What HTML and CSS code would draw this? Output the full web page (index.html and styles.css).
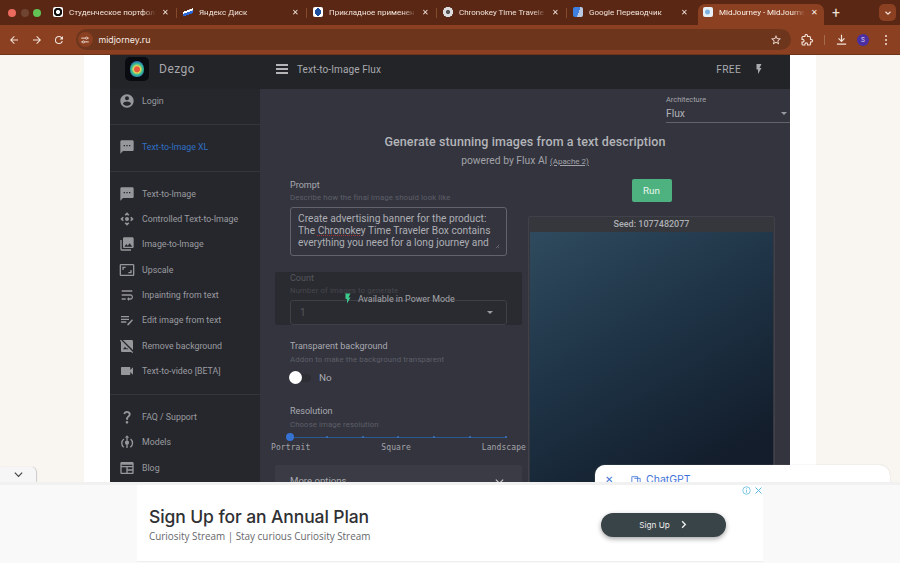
FILE: index.html
```html
<!DOCTYPE html>
<html lang="en">
<head>
<meta charset="utf-8">
<title>MidJourney - MidJourney</title>
<link rel="stylesheet" href="styles.css">
</head>
<body>
<div class="tabbar">
  <div class="lights"><i class="light red"></i><i class="light dim"></i><i class="light green"></i></div>
  <div class="tab"><span class="fav fav-a"></span><span class="tab-title">Студенческое портфол</span><span class="tab-x">✕</span></div>
  <div class="tab"><span class="fav fav-b"></span><span class="tab-title">Яндекс Диск</span><span class="tab-x">✕</span></div>
  <div class="tab"><span class="fav fav-c"></span><span class="tab-title">Прикладное применен</span><span class="tab-x">✕</span></div>
  <div class="tab"><span class="fav fav-d"></span><span class="tab-title">Chronokey Time Travele</span><span class="tab-x">✕</span></div>
  <div class="tab tab-last"><span class="fav fav-e"></span><span class="tab-title">Google Переводчик</span><span class="tab-x">✕</span></div>
  <div class="tab tab-active"><span class="fav fav-f"></span><span class="tab-title">MidJourney - MidJourne</span><span class="tab-x">✕</span></div>
  <span class="newtab">+</span>
  <span class="tabmenu"><svg viewBox="0 0 12 12" class="ic10"><path d="M3 4.500l3 3 3-3" fill="none" stroke="#f3e3da" stroke-width="1.400"/></svg></span>
</div>
<div class="toolbar">
  <svg viewBox="0 0 24 24" class="navic"><path d="M20 11H7.830l5.590-5.590L12 4l-8 8 8 8 1.410-1.410L7.830 13H20z"/></svg>
  <svg viewBox="0 0 24 24" class="navic"><path d="M12 4l-1.410 1.410L16.170 11H4v2h12.170l-5.580 5.590L12 20l8-8z"/></svg>
  <svg viewBox="0 0 24 24" class="navic"><path d="M17.650 6.350A7.960 7.960 0 0 0 12 4a8 8 0 1 0 7.730 10h-2.080A6 6 0 1 1 12 6c1.660 0 3.140.69 4.220 1.780L13 11h7V4l-2.350 2.350z"/></svg>
  <div class="omnibox">
    <span class="site-ic"><svg viewBox="0 0 16 16" class="ic10"><path d="M2 5h7M12 5h2M2 11h2M7 11h7" stroke="#f3e3da" stroke-width="1.500" fill="none"/><circle cx="10.500" cy="5" r="1.700" fill="none" stroke="#f3e3da" stroke-width="1.300"/><circle cx="5.500" cy="11" r="1.700" fill="none" stroke="#f3e3da" stroke-width="1.300"/></svg></span>
    <span class="url">midjorney.ru</span>
    <svg viewBox="0 0 24 24" class="star"><path d="M22 9.240l-7.190-.62L12 2 9.190 8.630 2 9.240l5.460 4.730L5.820 21 12 17.270 18.180 21l-1.630-7.030L22 9.240zM12 15.400l-3.760 2.270 1-4.280-3.320-2.880 4.380-.38L12 6.100l1.710 4.040 4.380.38-3.320 2.880 1 4.280L12 15.400z"/></svg>
  </div>
  <svg viewBox="0 0 24 24" class="puzzle"><path d="M20.500 11H19V7c0-1.100-.9-2-2-2h-4V3.500a2.500 2.500 0 0 0-5 0V5H4c-1.100 0-2 .9-2 2v3.800h1.500a2.700 2.700 0 0 1 0 5.400H2V20c0 1.100.9 2 2 2h3.800v-1.500a2.700 2.700 0 0 1 5.400 0V22H17c1.100 0 2-.9 2-2v-4h1.500a2.500 2.500 0 0 0 0-5z" fill="none" stroke="#f3e3da" stroke-width="2.200"/></svg>
  <i class="tool-sep"></i>
  <svg viewBox="0 0 24 24" class="download"><path d="M12 3v12M6.500 10l5.500 5.500 5.500-5.500M3.500 20.500h17" fill="none" stroke="#f3e3da" stroke-width="2.200"/></svg>
  <span class="avatar">S</span>
  <span class="kebab"><i></i><i></i><i></i></span>
</div>

<div class="page">
  <div class="sheet">
    <div class="app">
      <aside class="sidebar">
        <div class="brand">
          <span class="logo"><i class="logo-art"></i></span>
          <span class="brand-name">Dezgo</span>
        </div>
        <div class="side-sec side-first">
          <div class="side-item"><svg viewBox="0 0 24 24" class="side-ic"><path d="M12 2C6.480 2 2 6.480 2 12s4.480 10 10 10 10-4.480 10-10S17.520 2 12 2zm0 3c1.660 0 3 1.340 3 3s-1.340 3-3 3-3-1.340-3-3 1.340-3 3-3zm0 14.200c-2.500 0-4.710-1.280-6-3.220.03-1.990 4-3.080 6-3.080 1.990 0 5.970 1.090 6 3.080-1.290 1.940-3.500 3.220-6 3.220z"/></svg><span>Login</span></div>
        </div>
        <div class="side-sec">
          <div class="side-item side-on"><svg viewBox="0 0 24 24" class="side-ic"><path d="M20 2H4c-1.100 0-1.990.9-1.990 2L2 22l4-4h14c1.100 0 2-.9 2-2V4c0-1.100-.9-2-2-2zM9 11H7V9h2v2zm4 0h-2V9h2v2zm4 0h-2V9h2v2z"/></svg><span>Text-to-Image XL</span></div>
        </div>
        <div class="side-sec">
          <div class="side-item"><svg viewBox="0 0 24 24" class="side-ic"><path d="M20 2H4c-1.100 0-1.990.9-1.990 2L2 22l4-4h14c1.100 0 2-.9 2-2V4c0-1.100-.9-2-2-2zM9 11H7V9h2v2zm4 0h-2V9h2v2zm4 0h-2V9h2v2z"/></svg><span>Text-to-Image</span></div>
          <div class="side-item"><svg viewBox="0 0 24 24" class="side-ic"><path d="M15.540 5.540L13.770 7.300 12 5.540 10.230 7.300 8.460 5.540 12 2l3.540 3.540zm2.920 10l-1.760-1.770L18.460 12l-1.760-1.770 1.760-1.770L22 12l-3.540 3.540zm-10 2.920l1.770-1.760L12 18.460l1.770-1.760 1.770 1.760L12 22l-3.540-3.540zm-2.920-10l1.760 1.770L5.540 12l1.760 1.770-1.760 1.770L2 12l3.540-3.540z"/><circle cx="12" cy="12" r="3"/></svg><span>Controlled Text-to-Image</span></div>
          <div class="side-item"><svg viewBox="0 0 24 24" class="side-ic"><path d="M22 16V4c0-1.100-.9-2-2-2H8c-1.100 0-2 .9-2 2v12c0 1.100.9 2 2 2h12c1.100 0 2-.9 2-2zm-11-4l2.030 2.710L16 11l4 5H8l3-4zM2 6v14c0 1.100.9 2 2 2h14v-2H4V6H2z"/></svg><span>Image-to-Image</span></div>
          <div class="side-item"><svg viewBox="0 0 24 24" class="side-ic"><path d="M19 12h-2v3h-3v2h5v-5zM7 9h3V7H5v5h2V9zm14-6H3c-1.100 0-2 .9-2 2v14c0 1.100.9 2 2 2h18c1.100 0 2-.9 2-2V5c0-1.100-.9-2-2-2zm0 16.010H3V4.990h18v14.020z"/></svg><span>Upscale</span></div>
          <div class="side-item"><svg viewBox="0 0 24 24" class="side-ic"><path d="M4 19h6v-2H4v2zM20 5H4v2h16V5zm-3 6H4v2h13.250c1.100 0 2 .9 2 2s-.9 2-2 2H15v-2l-3 3 3 3v-2h2c2.210 0 4-1.790 4-4s-1.790-4-4-4z"/></svg><span>Inpainting from text</span></div>
          <div class="side-item"><svg viewBox="0 0 24 24" class="side-ic"><path d="M3 6h12v2H3zM3 10h12v2H3zM3 14h8v2H3zM21 12.400L19.600 11 12.500 18.100V20h1.900z"/></svg><span>Edit image from text</span></div>
          <div class="side-item"><svg viewBox="0 0 24 24" class="side-ic"><path d="M21 5c0-1.100-.9-2-2-2H5.830L21 18.170V5zM2.810 2.810L1.390 4.220 3 5.830V19c0 1.100.9 2 2 2h13.170l1.610 1.610 1.410-1.410L2.810 2.810zM6 17l3-4 2.250 3 .82-1.100 2.100 2.100H6z"/></svg><span>Remove background</span></div>
          <div class="side-item"><svg viewBox="0 0 24 24" class="side-ic"><path d="M17 10.500V7c0-.55-.45-1-1-1H4c-.55 0-1 .45-1 1v10c0 .55.45 1 1 1h12c.55 0 1-.45 1-1v-3.500l4 4v-11l-4 4z"/></svg><span>Text-to-video [BETA]</span></div>
        </div>
        <div class="side-sec side-end">
          <div class="side-item"><svg viewBox="0 0 24 24" class="side-ic"><path d="M11.070 12.850c.77-1.390 2.250-2.210 3.110-3.440.91-1.290.4-3.700-2.180-3.700-1.690 0-2.520 1.280-2.870 2.340L6.540 6.960C7.250 4.830 9.180 3 11.990 3c2.350 0 3.960 1.070 4.780 2.410.7 1.150 1.110 3.300.03 4.900-1.200 1.770-2.350 2.310-2.970 3.450-.25.46-.35.76-.35 2.240h-2.890c-.01-.78-.13-2.050.48-3.150zM14 20c0 1.100-.9 2-2 2s-2-.9-2-2 .9-2 2-2 2 .9 2 2z"/></svg><span>FAQ / Support</span></div>
          <div class="side-item"><svg viewBox="0 0 24 24" class="side-ic"><path d="M12 2l3.200 3.600H8.800z"/><path d="M12 5v5M12 15v6M7 20a8 8 0 0 1 .4-12.600M17 20a8 8 0 0 0 .4-12.600" fill="none" stroke="#96979b" stroke-width="2"/><circle cx="12" cy="13" r="3.200"/></svg><span>Models</span></div>
          <div class="side-item"><svg viewBox="0 0 24 24" class="side-ic"><path d="M20 3H4c-1.100 0-2 .9-2 2v14c0 1.100.9 2 2 2h16c1.100 0 2-.9 2-2V5c0-1.100-.9-2-2-2zM4 19v-8h7v8H4zm9 0v-3h7v3h-7zm7-5h-7v-3h7v3zM4 9V7h16v2H4z"/></svg><span>Blog</span></div>
        </div>
      </aside>
      <div class="content">
        <header class="topbar">
          <span class="burger"><i></i><i></i><i></i></span>
          <span class="top-title">Text-to-Image Flux</span>
          <span class="free">FREE</span>
          <svg viewBox="0 0 24 24" class="top-bolt"><path d="M7 2v11h3v9l7-12h-4l4-8z"/></svg>
        </header>
        <main class="main">
          <div class="arch-row">
            <div class="arch">
              <div class="arch-label">Architecture</div>
              <div class="arch-value"><span>Flux</span><i class="caret"></i></div>
            </div>
          </div>
          <h1 class="headline">Generate stunning images from a text description</h1>
          <p class="powered">powered by Flux AI <a class="license">(Apache 2)</a></p>
          <div class="cols">
            <section class="form">
              <div class="fld">
                <div class="fld-label">Prompt</div>
                <div class="fld-help">Describe how the final image should look like</div>
                <div class="prompt"><span class="word">Create advertising banner for the product:</span><br>The <span class="typo">Chronokey</span> Time Traveler Box contains<br>everything you need for a long journey and<svg viewBox="0 0 6 6" class="grip"><path d="M1 5l4-4M3.500 5L5 3.500" stroke="#8a8b92" stroke-width=".7"/></svg></div>
              </div>
              <div class="fld fld-locked">
                <div class="fld-label">Count</div>
                <div class="fld-help">Number of images to generate</div>
                <div class="count-select"><span>1</span><i class="caret"></i></div>
                <div class="lock-note"><svg viewBox="0 0 24 24" class="lock-bolt"><path d="M7 2v11h3v9l7-12h-4l4-8z"/></svg><span>Available in Power Mode</span></div>
              </div>
              <div class="fld fld-trans">
                <div class="fld-label">Transparent background</div>
                <div class="fld-help">Addon to make the background transparent</div>
                <div class="toggle-row"><span class="toggle"><i class="knob"></i></span><span>No</span></div>
              </div>
              <div class="fld fld-res">
                <div class="fld-label">Resolution</div>
                <div class="fld-help">Choose image resolution</div>
                <div class="slider"><i class="thumb"></i><i class="tick"></i><i class="tick"></i><i class="tick"></i><i class="tick"></i><i class="tick"></i><i class="tick"></i></div>
                <div class="marks"><span>Portrait</span><span>Square</span><span>Landscape</span></div>
              </div>
              <div class="more"><span>More options</span><svg viewBox="0 0 12 12" class="more-ic"><path d="M2 4l4 4 4-4" fill="none" stroke="#c5c5c9" stroke-width="1.300"/></svg></div>
            </section>
            <section class="result">
              <button class="run">Run</button>
              <div class="seed-card">
                <div class="seed">Seed: 1077482077</div>
                <div class="picture"></div>
              </div>
            </section>
          </div>
        </main>
      </div>
    </div>
  </div>
  <span class="collapse"><svg viewBox="0 0 12 12" class="collapse-ic"><path d="M2 4l4 4 4-4" fill="none" stroke="#444" stroke-width="1.300"/></svg></span>
  <div class="gpt"><span class="gpt-x">✕</span><svg viewBox="0 0 12 12" class="gpt-ic"><path d="M1 11V2h7v9M4 4h7v7" fill="none" stroke="#3f74d8" stroke-width="1"/></svg><span class="gpt-name">ChatGPT</span></div>
</div>

<div class="adbar">
  <div class="ad">
    <div class="ad-text">
      <div class="ad-title">Sign Up for an Annual Plan</div>
      <div class="ad-sub">Curiosity Stream | Stay curious Curiosity Stream</div>
    </div>
    <div class="ad-btn"><span>Sign Up</span><svg viewBox="0 0 10 10" class="ad-chev"><path d="M3.500 1.500L7 5 3.500 8.500" fill="none" stroke="#f1f1f1" stroke-width="1.500"/></svg></div>
    <div class="ad-marks"><svg viewBox="0 0 12 12" class="ad-mark"><circle cx="6" cy="6" r="5" fill="none" stroke="#57b7dc"/><path d="M6 5v4M6 3v1.200" stroke="#57b7dc"/></svg><svg viewBox="0 0 12 12" class="ad-mark"><path d="M2 2l8 8M10 2l-8 8" stroke="#57b7dc" stroke-width="1.300"/></svg></div>
  </div>
</div>
</body>
</html>
```
FILE: styles.css
```css
* { box-sizing: border-box; }
html, body { margin: 0; padding: 0; }
body {
  width: 900px; height: 563px; overflow: hidden;
  display: flex; flex-direction: column;
  font-family: Roboto, "Liberation Sans", sans-serif;
  background: #fff;
  filter: blur(.3px);
}

/* browser chrome */
.tabbar {
  height: 25px; flex: none; display: flex; align-items: flex-end;
  background: #592713; color: #f1e3da; font: 8px Roboto, "Noto Sans CJK SC", sans-serif;
}
.lights { width: 47px; flex: none; height: 25px; display: flex; gap: 4.700px; padding: 9px 0 0 8px; }
.light { width: 8px; height: 8px; border-radius: 50%; display: block; }
.red { background: #ec6a5e; }
.dim { background: #6f4532; }
.green { background: #61c454; }
.tab {
  width: 130px; height: 21px; flex: none; display: flex; align-items: center;
  padding: 0 6px 5px; gap: 6px; position: relative;
}
.tab::after { content: ""; position: absolute; right: 0; top: 4px; height: 10px; width: 1px; background: #85492c; }
.tab-last { width: 131px; padding-right: 8px; }
.tab-last::after, .tab-active::after { display: none; }
.tab-active { width: 126px; background: #8b4021; border-radius: 7px 7px 0 0; padding: 0 4px 5px 5px; color: #fbeee6; }
.fav { width: 10px; height: 10px; flex: none; border-radius: 2px; background: #fff; display: block; }
.fav-a { background: radial-gradient(circle, #fff 0 2px, #111 2.200px 4.200px, #fff 4.400px); }
.fav-b { background: linear-gradient(160deg, transparent 35%, #fff 36% 50%, #2a66d8 52% 70%, transparent 72%); }
.fav-c { background: radial-gradient(ellipse 3px 4px, #1c4fa0 0 100%, #fff 100%); }
.fav-d { background: radial-gradient(circle, #555 0 2px, #ddd 2.200px 5px, transparent 5.200px); }
.fav-e { background: linear-gradient(110deg, #3f7fe0 0 55%, #b9c9e4 56%); }
.fav-f { background: radial-gradient(circle at 45% 50%, #7fb4e2 0 2px, #e8f1f8 3px); }
.tab-title {
  flex: 1; min-width: 0; white-space: nowrap; overflow: hidden;
  -webkit-mask-image: linear-gradient(90deg, #000 85%, transparent);
  mask-image: linear-gradient(90deg, #000 85%, transparent);
}
.tab-x { font-size: 8px; margin-right: 2px; flex: none; }
.newtab { width: 24px; height: 21px; flex: none; text-align: center; font-size: 14px; line-height: 18px; }
.tabmenu {
  width: 17px; height: 17px; flex: none; margin: 0 4px 4px auto; border-radius: 5px;
  background: #8b4021; display: flex; align-items: center; justify-content: center;
}
.ic10 { width: 10px; height: 10px; display: block; }

.toolbar {
  height: 30px; flex: none; display: flex; align-items: center; background: #8b4021;
  border-bottom: 1px solid #6f3319; padding: 0 0 0 8px;
}
.navic { width: 12px; height: 12px; fill: #f3e3da; margin-right: 10.500px; flex: none; }
.omnibox {
  width: 265px; flex: 1 1 auto; height: 21px; margin: 0 10px 0 0; background: #6d351c; border-radius: 11px;
  display: flex; align-items: center; padding: 0 9px 0 2px; color: #f7ebe4; font: 8.800px Inter, sans-serif;
}
.site-ic { width: 15px; height: 15px; border-radius: 50%; background: #8b4021; display: flex; align-items: center; justify-content: center; margin-right: 6px; }
.url { flex: 1; }
.star { width: 12px; height: 12px; fill: #f3e3da; }
.puzzle { width: 12px; height: 12px; flex: none; margin-right: 10.500px; }
.tool-sep { width: 1px; height: 10px; background: #a5694b; margin-right: 10.500px; flex: none; }
.download { width: 13px; height: 13px; flex: none; margin-right: 9px; }
.avatar { width: 12px; height: 12px; border-radius: 50%; background: #4a2fa0; color: #e8e0ff; font: 6px/12px Inter, sans-serif; text-align: center; flex: none; margin-right: 16px; }
.kebab { display: flex; flex-direction: column; gap: 2px; flex: none; margin-right: 13px; }
.kebab i { width: 2px; height: 2px; border-radius: 50%; background: #f3e3da; display: block; }

/* page */
.page { height: 427px; flex: none; background: #f9f6f1; padding: 0 84px; position: relative; overflow: hidden; }
.sheet { height: 427px; background: #fff; padding: 0 26px; }
.app { height: 427px; display: flex; overflow: hidden; background: #33343e; }

.sidebar { width: 150px; flex: none; background: #26272c; color: #9a9ba0; font-size: 8.800px; }
.brand { height: 34px; padding: 0 0 6px 15px; display: flex; align-items: center; gap: 10px; background: #232428; }
.logo { width: 24px; height: 24px; border-radius: 5px; background: #0a0b10; display: flex; align-items: center; justify-content: center; }
.logo-art { width: 14px; height: 16px; border-radius: 50% 50% 45% 45%; display: block; background: radial-gradient(circle at 50% 52%, #e6573e 0 2.500px, #e8d35a 3.500px, #35c08f 5.500px, #2b6fb5 8px); }
.brand-name { color: #a7a8ac; font-size: 12px; letter-spacing: .5px; }
.side-sec { padding: 10px 0; border-bottom: 1px solid #35363b; }
.side-first { padding-top: 0; }
.side-end { border-bottom: 0; }
.side-item { height: 25.300px; display: flex; align-items: center; padding: 0 0 1px 9px; gap: 7px; white-space: nowrap; }
.side-ic { width: 16px; height: 16px; fill: #96979b; flex: none; }
.side-on { color: #2f6fc4; }

.content { flex: 1; min-width: 0; display: flex; flex-direction: column; }
.topbar { height: 34px; flex: none; background: #232428; display: flex; align-items: center; padding: 0 25px 6px 16px; color: #a9aaae; }
.burger { display: flex; flex-direction: column; gap: 2.500px; margin-right: 9px; }
.burger i { width: 12px; height: 1.500px; background: #b5b5b8; display: block; }
.top-title { font-size: 10px; flex: 1; letter-spacing: .1px; }
.free { font-size: 10.200px; margin-right: 12px; letter-spacing: .3px; }
.top-bolt { width: 12px; height: 12px; fill: #a9aaae; }

.main { flex: 1; min-height: 0; padding: 0 15px; position: relative; }
.arch-row { display: flex; justify-content: flex-end; margin-right: -15px; padding-top: 6px; }
.arch { width: 124px; border-bottom: 1px solid #62636b; height: 28px; }
.arch-label { font-size: 7.400px; line-height: 9px; color: #a5a6ab; }
.arch-value { font-size: 10.300px; line-height: 15px; margin-top: 1.500px; color: #b2b3b7; display: flex; align-items: center; justify-content: space-between; padding-right: 3px; }
.caret { border: 3px solid transparent; border-top: 3px solid #9a9ba1; border-bottom: 0; display: block; }
.headline { margin: 11px 0 0; text-align: center; font-size: 12.500px; line-height: 16px; font-weight: 500; color: #b4b5b9; letter-spacing: .1px; }
.powered { margin: 5px 0 0; text-align: center; font-size: 10.300px; line-height: 12px; color: #a2a3a8; }
.license { font-size: 8px; text-decoration: underline; }

.cols { display: flex; gap: 6px; margin-top: 11px; }
.form { width: 247px; flex: none; }
.fld { padding: 0 15px; }
.fld-label { font-size: 9px; line-height: 12px; color: #a9aab0; }
.fld-help { font-size: 7.800px; line-height: 12px; color: #5e5f68; margin-top: 1px; letter-spacing: .1px; white-space: nowrap; }
.prompt {
  margin-top: 3px; height: 49px; border: 1px solid #62636b; border-radius: 3px;
  padding: 5px 7px; font-size: 10.200px; line-height: 12px; color: #aeafb4; white-space: nowrap; position: relative;
}
.typo { text-decoration: underline dotted #a33; }
.grip { width: 5px; height: 5px; position: absolute; right: 6px; bottom: 6px; }
.fld-locked { margin-top: 16px; height: 53px; background: #2a2b30; border-radius: 2px; position: relative; }
.fld-locked .fld-label { color: #55565e; }
.fld-locked .fld-help { color: #45464e; }
.count-select { height: 25px; margin-top: 2.500px; border: 1px solid #3e3f47; border-radius: 3px; display: flex; align-items: center; justify-content: space-between; padding: 0 13px 0 9px; color: #55565e; font-size: 10px; }
.lock-note { position: absolute; left: 67px; top: 20px; display: flex; align-items: center; gap: 4px; color: #a4a5a9; font-size: 8.900px; }
.lock-bolt { width: 12px; height: 13px; fill: #3cc98c; }
.fld-trans { margin-top: 15px; }
.fld-trans .fld-help { margin-top: 2px; }
.toggle-row { display: flex; align-items: center; gap: 8px; margin-top: 6px; color: #a9aab0; font-size: 9.900px; }
.toggle { width: 22px; height: 8px; border-radius: 4px; background: #2d2e33; display: flex; align-items: center; margin-left: -1px; }
.knob { width: 13px; height: 13px; border-radius: 50%; background: #fff; display: block; flex: none; }
.fld-res { margin-top: 21.500px; }
.fld-res .fld-help { margin-top: 2px; }
.slider { height: 1px; background: #2a5a96; margin-top: 6px; display: flex; justify-content: space-between; align-items: center; position: relative; }
.tick { width: 2px; height: 2px; background: #3c75bd; display: block; border-radius: 50%; }
.thumb { width: 8px; height: 8px; border-radius: 50%; background: #3572d2; display: block; margin-left: -4px; margin-right: -2px; }
.marks { display: flex; justify-content: space-between; margin: 5px -19px 0; font: 8px/10px "DejaVu Sans Mono", monospace; color: #a4a5aa; letter-spacing: .1px; }
.marks span { white-space: nowrap; }
.more { margin-top: 12px; height: 40px; background: #3a3b44; padding: 10px 17px 0 15px; display: flex; justify-content: space-between; color: #a9aab0; font-size: 9.600px; border-radius: 2px; }
.more-ic { width: 11px; height: 11px; margin-top: 1px; }

.result { width: 247px; flex: none; display: flex; flex-direction: column; align-items: center; }
.run { width: 40px; height: 23px; border: 0; border-radius: 2px; background: #4db27f; color: #e9f6ef; font: 9.800px Roboto, sans-serif; padding: 0; flex: none; }
.seed-card { width: 247px; margin-top: 14px; border: 1px solid #40414a; border-radius: 2px; background: #36373d; }
.seed { height: 15px; text-align: center; font-size: 9px; line-height: 14px; color: #aeafb4; font-weight: 500; }
.picture { height: 260px; margin: 0 1px; background: linear-gradient(150deg, #2f4a5e 0%, #1d3244 45%, #131d2b 85%); }

/* overlays */
.collapse { position: absolute; left: 0; top: 412px; width: 36px; height: 15px; background: #f6f6f6; border-radius: 0 5px 0 0; box-shadow: 1px 0 1px #ccc; display: flex; justify-content: center; align-items: center; }
.collapse-ic { width: 11px; height: 11px; }
.gpt { position: absolute; left: 595px; top: 410px; width: 295px; height: 30px; background: #fff; border-radius: 10px 10px 0 0; display: flex; align-items: flex-start; gap: 5px; padding: 9px 0 0 10px; color: #3f74d8; font-size: 10.500px; box-shadow: 0 0 1px #bbb; }
.gpt-x { width: 21px; font-size: 10px; line-height: 12px; }
.gpt-ic { width: 10px; height: 10px; margin-top: 1px; }
.gpt-name { line-height: 12px; font-family: Inter, sans-serif; }

/* ad */
.adbar { height: 81px; flex: none; background: #f9f9f9; border-top: 3px solid #f1f1f1; padding: 0 137px; }
.ad { height: 77px; background: #fff; border-bottom: 1px solid #eee; display: flex; align-items: center; padding: 0 37px 0 12px; position: relative; }
.ad-text { flex: 1; padding-top: 4px; }
.ad-title { font: 500 17.500px/21px Inter, sans-serif; color: #2f3033; letter-spacing: -.1px; }
.ad-sub { font: 9.900px/15px "Open Sans", sans-serif; color: #66676b; margin-top: 2px; }
.ad-btn { width: 125px; height: 24px; margin-top: 3px; border-radius: 12px; background: #394448; color: #ececec; font: 8.200px Inter, sans-serif; display: flex; align-items: center; justify-content: center; gap: 9px; box-shadow: 0 2px 5px rgba(0,0,0,.35); }
.ad-chev { width: 9px; height: 9px; }
.ad-marks { position: absolute; right: 0; top: 1px; display: flex; gap: 3px; }
.ad-mark { width: 9px; height: 9px; display: block; }
```
